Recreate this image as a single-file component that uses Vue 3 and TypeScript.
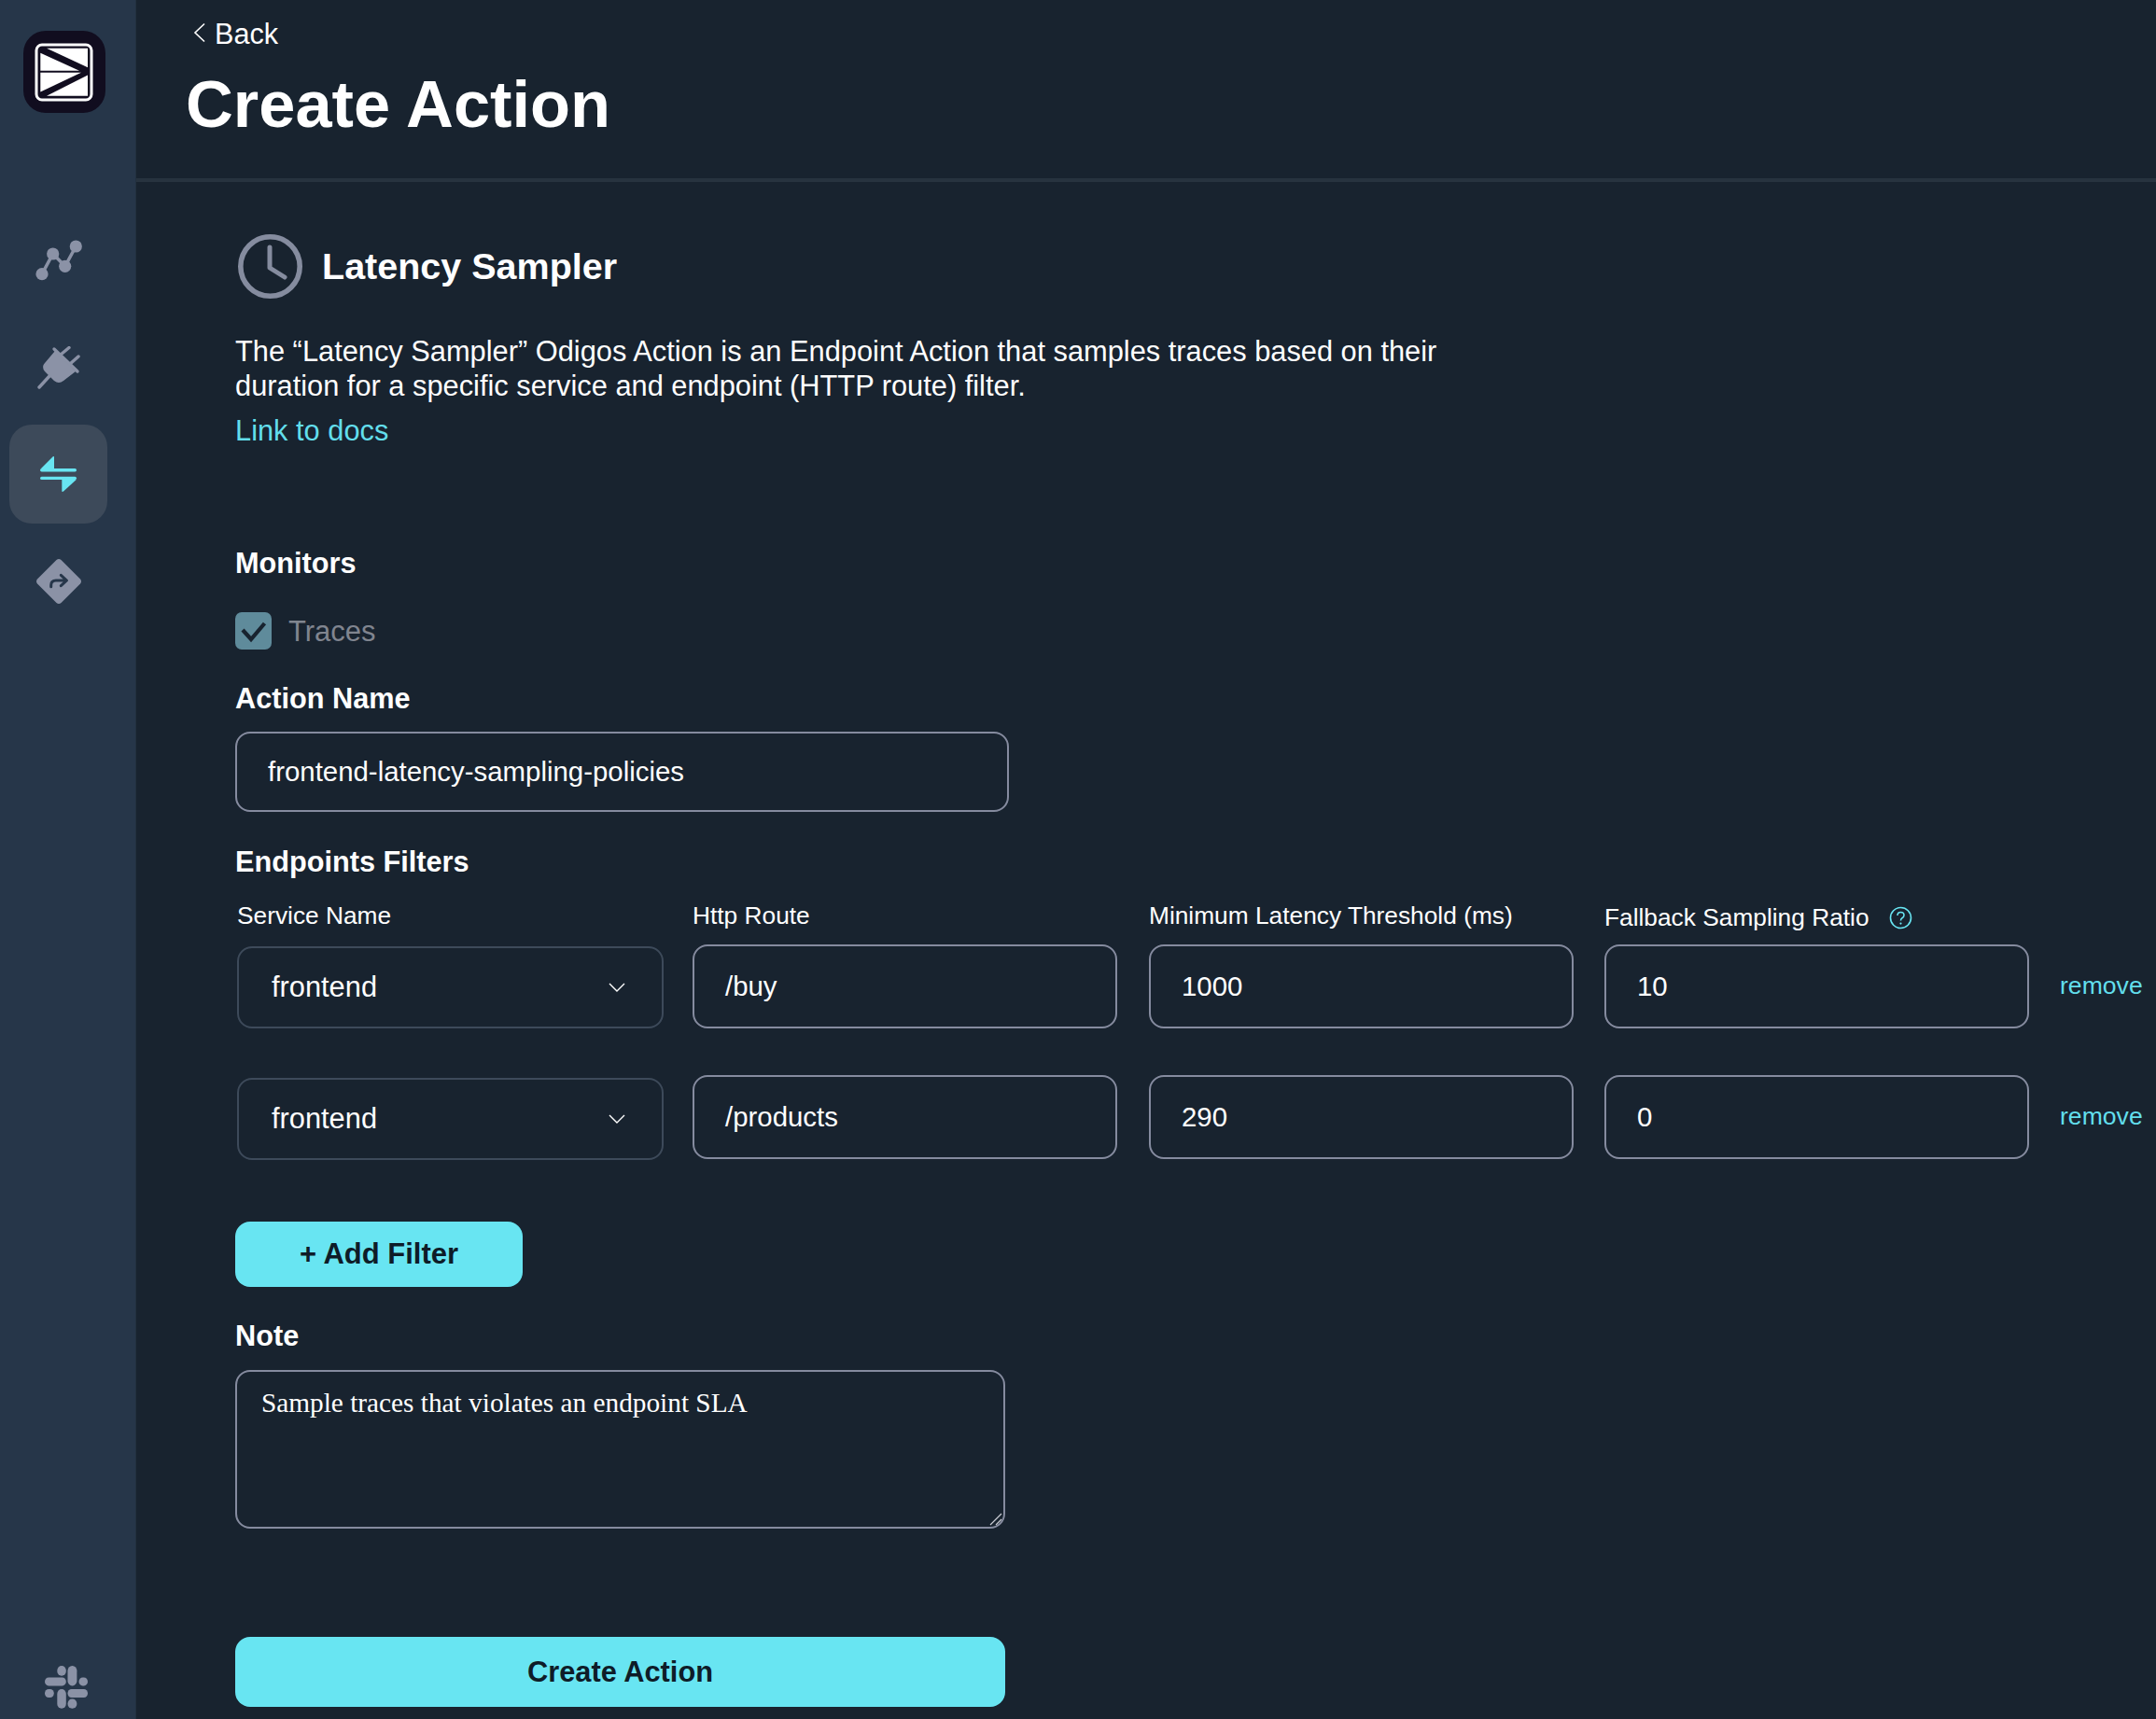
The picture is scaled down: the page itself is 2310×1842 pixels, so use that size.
<script setup lang="ts">
interface FilterRow { service: string; route: string; latency: string; ratio: string }
const rows: FilterRow[] = [
  { service: 'frontend', route: '/buy', latency: '1000', ratio: '10' },
  { service: 'frontend', route: '/products', latency: '290', ratio: '0' },
]
</script>

<template>
  <div class="app">
    <aside class="sidebar">
      <svg class="logo" width="88" height="88" viewBox="0 0 88 88">
        <rect width="88" height="88" rx="24" fill="#110d1f" />
        <rect x="14" y="15" width="59" height="59" rx="6" fill="none" stroke="#fff" stroke-width="3" />
        <g fill="#fff">
          <polygon points="25,18.7 69,18.7 69,39.3" />
          <polygon points="18.3,23.7 60,42.7 18.3,42.7" />
          <polygon points="18.3,44.7 62,44.7 18.3,65.5" />
          <polygon points="25,69.7 69,47.5 69,69.7" />
        </g>
      </svg>
      <nav class="nav">
        <div class="nav-item">
          <svg class="nudge" width="50" height="44" viewBox="0 0 50 44">
            <polyline points="7,36.7 18.7,15 31.7,28.3 43.3,7" fill="none" stroke="#8b92a6" stroke-width="3.5" />
            <circle cx="7" cy="36.7" r="6.6" fill="#8b92a6" />
            <circle cx="18.7" cy="15" r="6.6" fill="#8b92a6" />
            <circle cx="31.7" cy="28.3" r="6.6" fill="#8b92a6" />
            <circle cx="43.3" cy="7" r="6.6" fill="#8b92a6" />
          </svg>
        </div>
        <div class="nav-item">
          <svg class="nudge" width="46" height="46" viewBox="0 0 46 46">
            <path d="M19 5 L41 27 L28 37 Q23 41 18 37 L8 27 Q4 22 8 18 Z" fill="#8b92a6" />
            <g stroke="#8b92a6" stroke-width="3.4" stroke-linecap="round" fill="none">
              <line x1="25" y1="9" x2="34" y2="1.5" />
              <line x1="35" y1="19" x2="44" y2="11" />
              <line x1="18" y1="3" x2="43" y2="27" />
              <line x1="13" y1="32" x2="2" y2="44" />
            </g>
          </svg>
        </div>
        <div class="nav-item active">
          <svg width="40" height="40" viewBox="0 0 40 40" fill="#68e5f2">
            <path d="M14 1 Q15 0.5 15 2 L15 14 L1 14 Z" />
            <rect x="0" y="14" width="39" height="3.4" rx="1.7" />
            <rect x="0" y="22.7" width="39" height="3.4" rx="1.7" />
            <path d="M23.3 26 L38.7 26 L25 38.6 Q23.3 39.5 23.3 38 Z" />
          </svg>
        </div>
        <div class="nav-item">
          <svg width="50" height="50" viewBox="0 0 50 50">
            <path d="M22.5 2 Q25 0 27.5 2 L48 22.5 Q50 25 48 27.5 L27.5 48 Q25 50 22.5 48 L2 27.5 Q0 25 2 22.5 Z" fill="#8b92a6" />
            <path d="M16.7 30.7 V29 Q16.7 24 22 24 H33 M27.3 18.3 L33.5 24 L27.3 29.7" fill="none" stroke="#26364a" stroke-width="3" stroke-linecap="round" stroke-linejoin="round" />
          </svg>
        </div>
      </nav>
      <svg class="slack" width="46" height="46" viewBox="0 0 46 43" preserveAspectRatio="none" fill="#8b92a6">
        <rect x="13.3" y="0" width="9.5" height="10" rx="4.7" />
        <rect x="24.5" y="0" width="9.9" height="20" rx="4.9" />
        <rect x="0" y="11.7" width="22.8" height="8.3" rx="4.1" />
        <rect x="36.5" y="11.7" width="9.5" height="8.3" rx="4.1" />
        <rect x="0" y="23.3" width="9.8" height="8.4" rx="4.1" />
        <rect x="13.3" y="23.3" width="9.5" height="19.4" rx="4.7" />
        <rect x="24.5" y="23.3" width="21.5" height="8.4" rx="4.1" />
        <rect x="24.5" y="33.3" width="9.9" height="9.4" rx="4.7" />
      </svg>
    </aside>

    <main class="main">
      <header class="header">
        <div class="back">
          <svg class="back-icon" width="14" height="22" viewBox="0 0 14 22">
            <polyline points="12,1.5 2,11 12,20.5" fill="none" stroke="#fff" stroke-width="1.6" />
          </svg>
          <span>Back</span>
        </div>
        <h1 class="title">Create Action</h1>
      </header>

      <section class="content">
        <div class="heading">
          <svg width="69" height="69" viewBox="0 0 69 69">
            <circle cx="34.5" cy="34.5" r="31.7" fill="none" stroke="#858c9f" stroke-width="5.6" />
            <polyline points="34,14 34,36 50,46" fill="none" stroke="#858c9f" stroke-width="5" stroke-linecap="round" stroke-linejoin="round" />
          </svg>
          <h2 class="heading-text">Latency Sampler</h2>
        </div>
        <p class="desc">The “Latency Sampler” Odigos Action is an Endpoint Action that samples traces based on their<br />duration for a specific service and endpoint (HTTP route) filter.</p>
        <a class="docs">Link to docs</a>

        <div class="label monitors">Monitors</div>
        <div class="check-row">
          <span class="checkbox">
            <svg width="39" height="40" viewBox="0 0 39 40">
              <polyline points="8,19 17,29 31.5,12" fill="none" stroke="#18232f" stroke-width="4.2" />
            </svg>
          </span>
          <span class="check-label">Traces</span>
        </div>

        <div class="label action-label">Action Name</div>
        <div class="field name-field">frontend-latency-sampling-policies</div>

        <div class="label filters-label">Endpoints Filters</div>
        <div class="filters">
          <div class="filter-grid head">
            <div class="col-label">Service Name</div>
            <div class="col-label">Http Route</div>
            <div class="col-label">Minimum Latency Threshold (ms)</div>
            <div class="col-label ratio-label">
              <span>Fallback Sampling Ratio</span>
              <svg width="25" height="25" viewBox="0 0 25 25">
                <circle cx="12.5" cy="12.5" r="11" fill="none" stroke="#68e5f2" stroke-width="1.6" />
                <path d="M9 10 Q9 6.5 12.5 6.5 Q16 6.5 16 9.7 Q16 11.5 14 12.7 Q12.5 13.6 12.5 15.5" fill="none" stroke="#68e5f2" stroke-width="1.6" />
                <circle cx="12.5" cy="18.6" r="1.1" fill="#68e5f2" />
              </svg>
            </div>
          </div>
          <div v-for="row in rows" :key="row.route" class="filter-grid row">
            <div class="select">
              <span>{{ row.service }}</span>
              <svg width="18" height="10" viewBox="0 0 18 10">
                <polyline points="1,1 9,9 17,1" fill="none" stroke="#fff" stroke-width="1.4" />
              </svg>
            </div>
            <div class="field cell">{{ row.route }}</div>
            <div class="field cell">{{ row.latency }}</div>
            <div class="field cell">{{ row.ratio }}</div>
            <a class="remove">remove</a>
          </div>
        </div>

        <button class="btn add" type="button">+ Add Filter</button>

        <div class="label note-label">Note</div>
        <div class="note-wrap">
          <textarea class="note" readonly>Sample traces that violates an endpoint SLA</textarea>
          <svg class="grip" width="14" height="14" viewBox="0 0 14 14">
            <path d="M1 13 L13 1 M7 13 L13 7" fill="none" stroke="#c9ccd4" stroke-width="1.2" />
          </svg>
        </div>

        <button class="btn create" type="button">Create Action</button>
      </section>
    </main>
  </div>
</template>

<style>
html, body { margin: 0; background: #18232f; }
</style>

<style scoped>
.app {
  display: flex;
  width: 2310px;
  height: 1842px;
  overflow: hidden;
  background: #18232f;
  color: #fff;
  font-family: "Liberation Sans", Arial, sans-serif;
  font-size: 30px;
}
.sidebar {
  width: 145px;
  flex: none;
  display: flex;
  flex-direction: column;
  background: #263649;
  border-right: 1px solid #22303f;
}
.logo { margin: 33px 0 0 25px; display: block; }
.nav {
  margin: 104px 0 0 10px;
  display: flex;
  flex-direction: column;
  gap: 9px;
}
.nav-item {
  width: 105px;
  height: 106px;
  border-radius: 24px;
  display: flex;
  align-items: center;
  justify-content: center;
}
.nudge { transform: translateY(1px); }
.nav-item.active { background: #3d4a5a; }
.slack { margin: auto 0 11px 48px; display: block; }

.main { flex: 1; min-width: 0; }
.header {
  height: 173px;
  border-bottom: 4px solid #27333f;
  padding: 18px 0 0 53px;
}
.back {
  display: flex;
  align-items: center;
  height: 36px;
  padding-left: 8px;
  line-height: 36px;
  font-size: 30.6px;
}
.back-icon { margin-right: 9px; margin-top: -3px; }
.title {
  margin: 18px 0 0;
  font-size: 70.4px;
  line-height: 80px;
  font-weight: 700;
}

.content { padding-left: 106px; }
.heading {
  display: flex;
  align-items: center;
  margin: 56px 0 0 3px;
  height: 69px;
}
.heading-text {
  margin: -2px 0 0 21px;
  font-size: 39.5px;
  line-height: 48px;
  font-weight: 700;
}
.desc {
  margin: 38px 0 0;
  font-size: 30.8px;
  line-height: 37px;
}
.docs {
  display: block;
  margin-top: 12px;
  line-height: 36px;
  font-size: 30.8px;
  color: #62deec;
}
.label {
  font-size: 30.7px;
  line-height: 36px;
  font-weight: 700;
}
.monitors { margin-top: 106px; }
.check-row {
  display: flex;
  align-items: center;
  margin-top: 34px;
  height: 40px;
}
.checkbox {
  width: 39px;
  height: 40px;
  border-radius: 7px;
  background: #5f8b9b;
  display: block;
}
.checkbox svg { display: block; }
.check-label { margin: 2px 0 0 18px; color: #80858f; font-size: 31px; }
.action-label { margin-top: 35px; }
.field {
  box-sizing: border-box;
  display: flex;
  align-items: center;
  border: 2px solid #858b9f;
  border-radius: 16px;
  font-size: 29.4px;
}
.name-field {
  margin-top: 17px;
  width: 829px;
  height: 86px;
  padding-left: 33px;
}
.filters-label { margin-top: 36px; }
.filters { margin: 21px 0 0 2px; }
.filter-grid {
  display: grid;
  grid-template-columns: 488px 489px 488px 488px auto;
  align-items: start;
}
.filter-grid.row { margin-top: 50px; }
.filter-grid.head + .filter-grid.row { margin-top: 10px; }
.col-label { font-size: 26.3px; line-height: 37px; }
.ratio-label {
  display: flex;
  align-items: center;
  gap: 21px;
  padding-top: 2px;
  box-sizing: border-box;
}
.select {
  box-sizing: border-box;
  width: 457px;
  height: 88px;
  margin-top: 2px;
  border: 2px solid #3d4a5a;
  border-radius: 16px;
  padding: 0 39px 0 35px;
  display: flex;
  align-items: center;
  justify-content: space-between;
  font-size: 30.8px;
}
.filter-grid.row:last-child .select { margin-top: 3px; }
.cell {
  width: 455px;
  height: 90px;
  padding-left: 33px;
}
.remove {
  height: 88px;
  display: flex;
  align-items: center;
  font-size: 26.6px;
  color: #62deec;
}
.btn {
  display: block;
  border: 0;
  padding: 0;
  background: #68e5f2;
  color: #0e1c28;
  font-family: inherit;
  font-weight: 700;
  font-size: 31px;
  border-radius: 16px;
}
.add { margin-top: 66px; width: 308px; height: 70px; }
.note-label { margin-top: 35px; }
.note-wrap {
  position: relative;
  margin-top: 18px;
  width: 825px;
  height: 170px;
}
.note {
  display: block;
  box-sizing: border-box;
  margin: 0;
  width: 100%;
  height: 100%;
  padding: 15px 26px;
  background: transparent;
  color: #fff;
  border: 2px solid #858b9f;
  border-radius: 16px;
  outline: none;
  resize: none;
  font-family: "Liberation Serif", "Times New Roman", serif;
  font-size: 29.3px;
  line-height: 36px;
}
.grip { position: absolute; right: 3px; bottom: 3px; }
.create { margin-top: 116px; width: 825px; height: 75px; font-size: 30.8px; }
</style>
